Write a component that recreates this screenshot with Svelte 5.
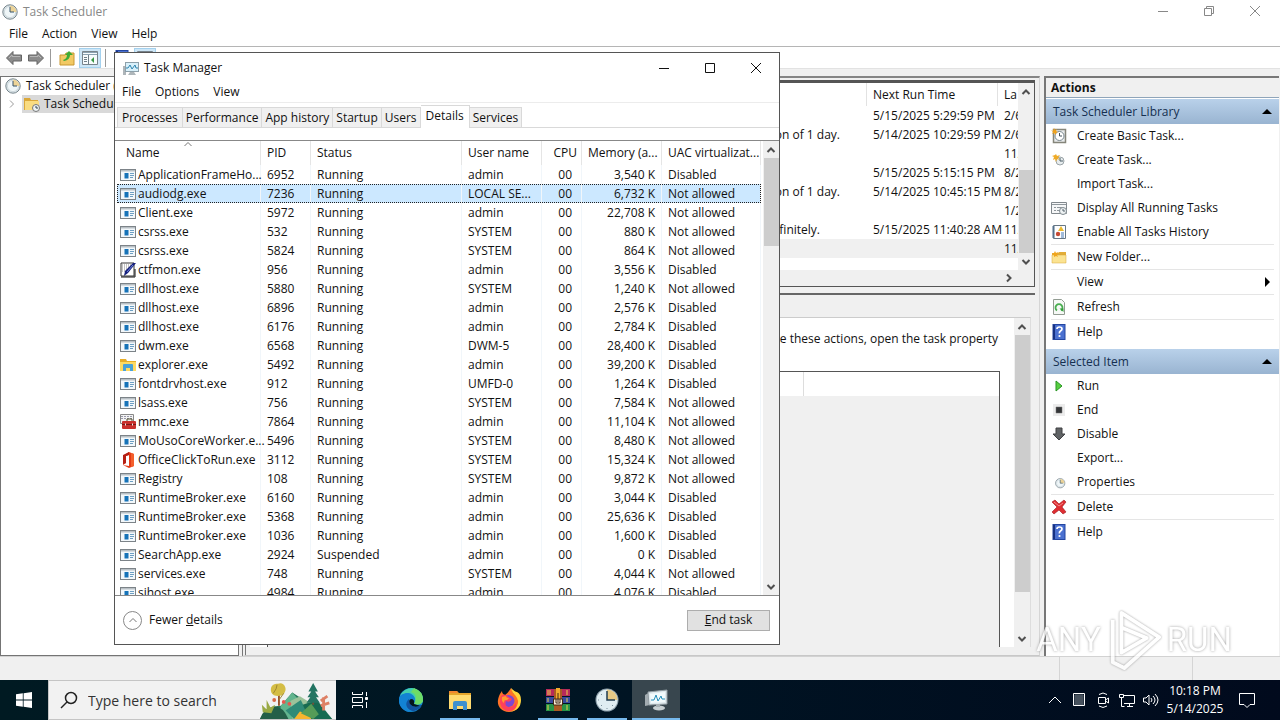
<script lang="ts">
	const processes = [
		['app', 'ApplicationFrameHo...', '6952', 'Running', 'admin', '3,540 K', 'Disabled'],
		['app', 'audiodg.exe', '7236', 'Running', 'LOCAL SE...', '6,732 K', 'Not allowed'],
		['app', 'Client.exe', '5972', 'Running', 'admin', '22,708 K', 'Not allowed'],
		['app', 'csrss.exe', '532', 'Running', 'SYSTEM', '880 K', 'Not allowed'],
		['app', 'csrss.exe', '5824', 'Running', 'SYSTEM', '864 K', 'Not allowed'],
		['pen', 'ctfmon.exe', '956', 'Running', 'admin', '3,556 K', 'Disabled'],
		['app', 'dllhost.exe', '5880', 'Running', 'SYSTEM', '1,240 K', 'Not allowed'],
		['app', 'dllhost.exe', '6896', 'Running', 'admin', '2,576 K', 'Disabled'],
		['app', 'dllhost.exe', '6176', 'Running', 'admin', '2,784 K', 'Disabled'],
		['app', 'dwm.exe', '6568', 'Running', 'DWM-5', '28,400 K', 'Disabled'],
		['explorer', 'explorer.exe', '5492', 'Running', 'admin', '39,200 K', 'Disabled'],
		['app', 'fontdrvhost.exe', '912', 'Running', 'UMFD-0', '1,264 K', 'Disabled'],
		['app', 'lsass.exe', '756', 'Running', 'SYSTEM', '7,584 K', 'Not allowed'],
		['toolbox', 'mmc.exe', '7864', 'Running', 'admin', '11,104 K', 'Not allowed'],
		['app', 'MoUsoCoreWorker.e...', '5496', 'Running', 'SYSTEM', '8,480 K', 'Not allowed'],
		['office', 'OfficeClickToRun.exe', '3112', 'Running', 'SYSTEM', '15,324 K', 'Not allowed'],
		['app', 'Registry', '108', 'Running', 'SYSTEM', '9,872 K', 'Not allowed'],
		['app', 'RuntimeBroker.exe', '6160', 'Running', 'admin', '3,044 K', 'Disabled'],
		['app', 'RuntimeBroker.exe', '5368', 'Running', 'admin', '25,636 K', 'Disabled'],
		['app', 'RuntimeBroker.exe', '1036', 'Running', 'admin', '1,600 K', 'Disabled'],
		['app', 'SearchApp.exe', '2924', 'Suspended', 'admin', '0 K', 'Disabled'],
		['app', 'services.exe', '748', 'Running', 'SYSTEM', '4,044 K', 'Not allowed'],
		['app', 'sihost.exe', '4984', 'Running', 'admin', '4,076 K', 'Disabled']
	]

	const tasks = [
		['', '5/15/2025 5:29:59 PM', '2/6'],
		['on of 1 day.', '5/14/2025 10:29:59 PM', '2/6'],
		['', '', '11/'],
		['', '5/15/2025 5:15:15 PM', '8/2'],
		['on of 1 day.', '5/14/2025 10:45:15 PM', '8/2'],
		['', '', '1/2'],
		['finitely.', '5/15/2025 11:40:28 AM', '11/'],
		['', '', '11/']
	]

	const groups = [
		{
			title: 'Task Scheduler Library',
			items: [
				{ icon: 'basic', text: 'Create Basic Task...' },
				{ icon: 'newtask', text: 'Create Task...' },
				{ icon: '', text: 'Import Task...' },
				{ icon: 'display', text: 'Display All Running Tasks' },
				{ icon: 'history', text: 'Enable All Tasks History' },
				{ icon: 'newfolder', text: 'New Folder...', line: true },
				{ icon: '', text: 'View', line: true, more: true },
				{ icon: 'refresh', text: 'Refresh', line: true },
				{ icon: 'help', text: 'Help', line: true }
			]
		},
		{
			title: 'Selected Item',
			items: [
				{ icon: 'run', text: 'Run' },
				{ icon: 'end', text: 'End' },
				{ icon: 'disable', text: 'Disable' },
				{ icon: '', text: 'Export...' },
				{ icon: 'properties', text: 'Properties' },
				{ icon: 'delete', text: 'Delete', line: true },
				{ icon: 'help', text: 'Help', line: true }
			]
		}
	]

	const tabs = ['Processes', 'Performance', 'App history', 'Startup', 'Users', 'Details', 'Services']

	const pinned = [
		{ icon: 'edge', label: 'Edge', state: '' },
		{ icon: 'files', label: 'File Explorer', state: 'open' },
		{ icon: 'firefox', label: 'Firefox', state: '' },
		{ icon: 'winrar', label: 'WinRAR', state: 'open' },
		{ icon: 'clock', label: 'Task Scheduler', state: 'open' },
		{ icon: 'monitor', label: 'Task Manager', state: 'active' }
	]

	let selected = 1
	let tab = 'Details'
</script>

{#snippet icon(name)}
	<svg class="icon" viewBox="0 0 16 16" aria-hidden="true">
		{#if name === 'app'}
			<rect x=".5" y="2.5" width="15" height="11" fill="#f3f8fb" stroke="#7c8388" />
			<path d="M1 3h14v1.500H1z" fill="#b9c0c5" />
			<path d="M4.500 6h4v5.500h-4z" fill="#1673b8" />
			<path d="M10 6.500h4M10 8.500h4M10 10.500h3" stroke="#6d9fc3" />
		{:else if name === 'pen'}
			<path d="M1 1h13v13H1z" fill="#fff" stroke="#333" />
			<path d="M2 3h9M2 5h8M2 7h6M2 9h4" stroke="#888" stroke-dasharray="1 1" />
			<path d="M16 1L8 11l-4 3 1-5 8-8z" fill="#16207c" />
			<path d="M13 3L7 10" stroke="#6e83dc" />
			<path d="M1 15h14V7" fill="none" stroke="#111" />
		{:else if name === 'explorer'}
			<path d="M0 2h6l1 2h9v10H0z" fill="#e8ad28" />
			<path d="M0 5h16v9H0z" fill="#ffda62" />
			<path d="M3 14V8q0-1 1-1h8q1 0 1 1v6h-3v-3H6v3z" fill="#4aa1d8" />
		{:else if name === 'toolbox'}
			<path d="M.5.500h13v9H.5z" fill="#f3f3f3" stroke="#888" />
			<path d="M1 2.500h12M1 4.500h12" stroke="#99a" stroke-dasharray="2 1" />
			<path d="M7 7V5h5v2" fill="none" stroke="#553" />
			<rect x="2" y="7" width="14" height="8" rx="1" fill="#c9302c" />
			<path d="M2 10.500h14" stroke="#7b1715" />
			<path d="M5.500 9.500v2M12.500 9.500v2" stroke="#eee" />
		{:else if name === 'office'}
			<path d="M9 0l5 2v12l-5 2-6-3 6 1V3L6 4v7l-3 2V4z" fill="#e43a16" />
			<path d="M9 0L3 3v9l3-1V4l3-1z" fill="#b51f14" />
			<path d="M11 1l3 1v12l-3 1z" fill="#f35f2c" />
		{:else if name === 'clock' || name === 'properties'}
			<g transform={name === 'properties' ? 'translate(4 4) scale(.65)' : ''}>
				<circle cx="8" cy="8" r="7.200" fill="#dce8ec" stroke="#77848b" />
				<circle cx="8" cy="8" r="5.600" fill="#eff6f8" stroke="#b7c1c6" stroke-width=".5" />
				<path d="M8 8V1.500A6.500 6.500 0 0 1 14.500 8z" fill="#ecd397" />
				<path d="M8 3v5h4" fill="none" stroke="#36556c" />
			</g>
		{:else if name === 'clockfolder'}
			<path d="M0 2h6l1 2h7v10H0z" fill="#dba83a" />
			<path d="M1 5h14v9H1z" fill="#f9dc82" />
			<circle cx="12" cy="12" r="3.500" fill="#edf3f5" stroke="#777" />
			<path d="M12 10v2h2" fill="none" stroke="#345" />
		{:else if name === 'monitor'}
			<path d="M0 6h3v9H0z" fill="#aeb5b9" />
			<rect x="2.500" y="2.500" width="13" height="9" fill="#d8f0fa" stroke="#8da0aa" />
			<path d="M3 8h2l2-3 2 4 3-4 1 3h2" fill="none" stroke="#2d84af" />
			<path d="M7 12h4l2 3H5z" fill="#aeb6ba" />
		{:else if name === 'back' || name === 'forward'}
			<g transform={name === 'forward' ? 'matrix(-1 0 0 1 16 0)' : ''}>
				<path d="M.5 8L7 1.500V5h8.500v6H7v3.500z" fill="#8b8b8b" stroke="#646464" />
				<path d="M3 8l3-3v1.500h8" fill="none" stroke="#b5b5b5" />
			</g>
		{:else if name === 'up'}
			<path d="M1 5h5l1-2h8v12H1z" fill="#f2c964" stroke="#c99731" />
			<path d="M4 10q4-1 4-5H6l4-4 4 4h-3q0 5-6 6z" fill="#3dab36" />
		{:else if name === 'pane'}
			<path d="M.5 1.500h15v13H.5z" fill="#f7fbfd" stroke="#78838b" />
			<path d="M1 2.500h14M1 4.500h14" stroke="#8ba2b2" />
			<path d="M6.500 5v9M2 7.500h3M2 9.500h3M2 11.500h3" stroke="#6f7e88" />
			<path d="M12 7v6l-3-3z" fill="#399744" />
		{:else if name === 'basic' || name === 'newtask'}
			{#if name === 'basic'}
				<path d="M2.500 1.500h12v13h-12z" fill="#e7eaeb" stroke="#85857a" stroke-width="1.500" />
				<circle cx="8.500" cy="8" r="4.500" fill="#fff" stroke="#78868d" />
				<path d="M8.500 5v3H11" fill="none" stroke="#43525c" />
				<path d="M3 0l1 2 2-1-1 2 2 1-2 1v2L3 5 1 6l1-2-2-2 2 1z" fill="#efa21d" />
			{:else}
				<circle cx="9" cy="9" r="4" fill="#e7ecee" stroke="#9ba4a8" />
				<path d="M9 6v3h3" fill="none" stroke="#4b5c67" />
				<path d="M5 2l1 2 3-1-2 3 2 2-3-1-1 3-1-3-2 1 1-3-2-1 3-1z" fill="#efab27" />
			{/if}
		{:else if name === 'display'}
			<path d="M.5 2.500h15v11H.5z" fill="#f6f7f8" stroke="#81888d" />
			<path d="M1 4.500h14M3 7.500h2M6 7.500h5M3 10.500h2M6 10.500h3" stroke="#8e969b" />
			<circle cx="12" cy="11" r="3.500" fill="#eef2f3" stroke="#808a90" />
			<path d="M12 9v2h2" fill="none" stroke="#53616a" />
		{:else if name === 'history'}
			<path d="M2.500 1.500h12v13h-12z" fill="#fff" stroke="#667785" />
			<path d="M1 3h3M1 5h3M1 7h3M1 9h3M1 11h3M1 13h3" stroke="#4b6c8c" />
			<path d="M10 2l3 5H7z" fill="#ebb92f" />
			<circle cx="7" cy="10" r="2.200" fill="#c64a35" />
			<path d="M10 9h3M10 11h3M10 13h3" stroke="#4478b5" />
		{:else if name === 'newfolder'}
			<path d="M1 4h6l1-1h7v11H1z" fill="#e2ac37" />
			<path d="M1 6h14v8H1z" fill="#fbe391" stroke="#d6a439" stroke-width=".5" />
			<path d="M4 2l1 2 2-1-1 3 1 2-2-1-2 1V6L1 5l2-1z" fill="#f1a51b" />
		{:else if name === 'refresh'}
			<path d="M2.500.5h8l3 3v12h-11z" fill="#f6f9f6" stroke="#929c92" />
			<path d="M6 11.500a3.500 3.500 0 1 1 4 0" fill="none" stroke="#49ae50" stroke-width="1.800" />
			<path d="M8.500 9.500h4v3.500z" fill="#319c3a" />
		{:else if name === 'help'}
			<rect x="2" y=".5" width="12" height="15" fill="#4a70d0" stroke="#2345a0" />
			<path d="M3 1v14" stroke="#173181" stroke-width="2" />
			<path d="M6 5q0-2 2.500-2T11 5q0 1-1.500 2T8.500 9.500" fill="none" stroke="#fff" stroke-width="1.700" />
			<circle cx="8.500" cy="12" r="1.100" fill="#fff" />
		{:else if name === 'run'}
			<path d="M5 3l6 5-6 5z" fill="#58cf42" stroke="#269521" />
		{:else if name === 'end'}
			<path d="M2 2h12v12H2z" fill="#ececec" />
			<path d="M5 5h6v6H5z" fill="#343638" stroke="#767676" stroke-width=".5" />
		{:else if name === 'disable'}
			<path d="M5 2h6v6h3l-6 6-6-6h3z" fill="#606365" stroke="#3e4042" />
		{:else if name === 'delete'}
			<path d="M1 3l3-2 4 4 5-4 2 2-4 5 4 5-3 2-4-4-5 4-2-2 5-5z" fill="#df2d32" stroke="#9d171c" stroke-width=".6" />
			<path d="M3 3l5 4 4-3" fill="none" stroke="#f58a8a" />
		{/if}
	</svg>
{/snippet}

{#snippet chevron(direction)}
	<svg class="chevron {direction}" viewBox="0 0 10 10" aria-hidden="true">
		<path d="M1.500 7L5 3.500 8.500 7" />
	</svg>
{/snippet}

{#snippet scrollbar(start, size)}
	<div class="scrollbar">
		<button aria-label="Scroll up">{@render chevron('')}</button>
		<div class="track">
			<div class="thumb" style="top: {start}%; height: {size}%"></div>
		</div>
		<button aria-label="Scroll down">{@render chevron('down')}</button>
	</div>
{/snippet}

{#snippet windowButtons(restore)}
	<div class="window-buttons">
		<button aria-label="Minimize">
			<svg viewBox="0 0 12 12"><path d="M1 6.500h10" /></svg>
		</button>
		<button aria-label="Maximize">
			<svg viewBox="0 0 12 12">
				{#if restore}
					<path d="M1.500 3.500h7v7h-7zM3.500 3.500v-2h7v7h-2" />
				{:else}
					<path d="M1.500 1.500h9v9h-9z" />
				{/if}
			</svg>
		</button>
		<button aria-label="Close">
			<svg viewBox="0 0 12 12"><path d="M1 1l10 10M11 1L1 11" /></svg>
		</button>
	</div>
{/snippet}

<div class="desktop">
	<main class="scheduler">
		<header class="titlebar">
			{@render icon('clock')}
			<span>Task Scheduler</span>
			{@render windowButtons(true)}
		</header>
		<nav class="menu">
			<button>File</button>
			<button>Action</button>
			<button>View</button>
			<button>Help</button>
		</nav>
		<div class="toolbar">
			<button aria-label="Back">{@render icon('back')}</button>
			<button aria-label="Forward">{@render icon('forward')}</button>
			<i></i>
			<button aria-label="Up">{@render icon('up')}</button>
			<button class="on" aria-label="Console tree">{@render icon('pane')}</button>
			<i></i>
			<button aria-label="Help">{@render icon('help')}</button>
			<button class="on" aria-label="Action pane">{@render icon('pane')}</button>
		</div>

		<div class="panes">
			<aside class="tree">
				<div class="node">{@render icon('clock')}<span>Task Scheduler (L</span></div>
				<div class="node child">
					{@render chevron('right')}
					<span class="leaf">{@render icon('clockfolder')}<span>Task Schedule</span></span>
				</div>
			</aside>

			<section class="middle">
				<div class="list">
					<div class="list-body">
						<table>
							<colgroup><col /><col class="next" /><col class="last" /></colgroup>
							<thead>
								<tr><th></th><th>Next Run Time</th><th>La</th></tr>
							</thead>
							<tbody>
								{#each tasks as [trigger, next, last], i}
									<tr class:current={i === tasks.length - 1}>
										<td>{trigger}</td>
										<td>{next}</td>
										<td>{last}</td>
									</tr>
								{/each}
							</tbody>
						</table>
						{@render scrollbar(46, 54)}
					</div>
					<div class="hscroll">
						<button aria-label="Scroll right">{@render chevron('right')}</button>
					</div>
				</div>
				<div class="detail">
					<div class="detail-page">
						<div class="detail-content">
							<p>nge these actions, open the task property</p>
							<div class="actions-box">
								<div class="box-head"><span></span></div>
							</div>
						</div>
						{@render scrollbar(0, 87)}
					</div>
				</div>
			</section>

			<aside class="actions">
				<h2>Actions</h2>
				{#each groups as group}
					<section>
						<button class="group-title">
							{group.title}
							<svg viewBox="0 0 10 5"><path d="M0 5l5-5 5 5z" /></svg>
						</button>
						{#each group.items as item}
							<button class="action" class:line={item.line}>
								{@render icon(item.icon)}
								<span>{item.text}</span>
								{#if item.more}
									<svg class="more" viewBox="0 0 5 10"><path d="M0 0l5 5-5 5z" /></svg>
								{/if}
							</button>
						{/each}
					</section>
				{/each}
			</aside>
		</div>
		<footer class="status"><span></span><span></span></footer>
	</main>

	<section class="manager">
		<header class="titlebar">
			{@render icon('monitor')}
			<span>Task Manager</span>
			{@render windowButtons(false)}
		</header>
		<nav class="menu">
			<button>File</button>
			<button>Options</button>
			<button>View</button>
		</nav>
		<div class="tabs" role="tablist">
			{#each tabs as name}
				<button
					role="tab"
					aria-selected={tab === name}
					class:chosen={tab === name}
					on:click={() => (tab = name)}
				>
					{name}
				</button>
			{/each}
		</div>
		<div class="processes">
			<div class="rows">
				<table>
					<colgroup>
						<col class="name" />
						<col class="pid" />
						<col class="state" />
						<col class="user" />
						<col class="cpu" />
						<col class="user" />
						<col />
					</colgroup>
					<thead>
						<tr>
							<th>Name <span class="sort">{@render chevron('')}</span></th>
							<th>PID</th>
							<th>Status</th>
							<th>User name</th>
							<th>CPU</th>
							<th>Memory (a...</th>
							<th>UAC virtualizat...</th>
						</tr>
					</thead>
					<tbody>
						{#each processes as [kind, name, pid, state, user, memory, uac], i}
							<tr class:selected={i === selected} on:click={() => (selected = i)}>
								<td><div class="process">{@render icon(kind)}{name}</div></td>
								<td>{pid}</td>
								<td>{state}</td>
								<td>{user}</td>
								<td>00</td>
								<td>{memory}</td>
								<td>{uac}</td>
							</tr>
						{/each}
					</tbody>
				</table>
			</div>
			{@render scrollbar(0, 21)}
		</div>
		<footer>
			<button class="fewer">
				<span class="ring">{@render chevron('')}</span>
				<span>Fewer <u>d</u>etails</span>
			</button>
			<button class="end-task"><u>E</u>nd task</button>
		</footer>
	</section>

	<div class="watermark">
		<span>ANY</span>
		<svg viewBox="0 0 60 66" aria-hidden="true">
			<path d="M17 42V5l39 25-36 32-12-6V12M17 21v25l26-15-26-11" />
		</svg>
		<span>RUN</span>
	</div>

	<nav class="taskbar">
		<button class="start" aria-label="Start">
			<svg viewBox="0 0 16 16">
				<path d="M0 2.300L6.800 1.300v6.300H0zM7.600 1.200L16 0v7.600H7.600zM0 8.400h6.800v6.300L0 13.700zM7.600 8.400H16V16l-8.400-1.200z" />
			</svg>
		</button>
		<label class="search">
			<svg class="glass" viewBox="0 0 18 18">
				<circle cx="11" cy="7" r="5.500" />
				<path d="M7 11l-6 6" />
			</svg>
			<input placeholder="Type here to search" aria-label="Search" />
			<svg class="scene" viewBox="0 0 78 40" aria-hidden="true">
				<path d="M0 40q8-14 22-14l12-14 14 9 28 19z" fill="#27775b" />
				<path d="M22 26l12-14 8 9-8 19H20z" fill="#62b58e" />
				<path d="M32 21l10-5 18 11-8 13H34z" fill="#9cc39a" />
				<path d="M27 31l16-11 6 12-13 8z" fill="#308b77" />
				<path d="M45 25l15-5 16 20H52z" fill="#176b51" />
				<path d="M36 40l6-8 10 3 2 5z" fill="#f7b52f" />
				<path d="M43 34l11-10 8 11-6 5z" fill="#559c58" />
				<path d="M0 40q4-12 14-13t16 13z" fill="#245f48" />
				<path d="M20 26V11" stroke="#9b542c" stroke-width="2" />
				<path d="M12 12c-2-6 2-10 7-9 6-3 10 5 7 9-2 5-12 5-14 0z" fill="#d4bd45" />
				<path d="M14 13q4-5 4-9M20 20l5-7" stroke="#9c842e" fill="none" />
				<path d="M56 25V7" stroke="#735238" stroke-width="2" />
				<path d="M56 2l-5 9h3l-4 6h3l-4 6h14l-4-6h3l-4-6h3z" fill="#237462" />
				<path d="M3 33l-1-8 5 5V20l4 8 5-3-4 9z" fill="#99a944" />
				<path d="M67 31V17M64 21l7-5M64 26l9-3" stroke="#de8065" stroke-width="3" />
				<circle cx="15" cy="20" r="2" fill="#d96846" />
				<circle cx="31" cy="24" r="2" fill="#e6584d" />
				<circle cx="25" cy="22" r="2" fill="#e6584d" />
			</svg>
		</label>
		<button class="taskview" aria-label="Task view">
			<svg viewBox="0 0 16 16">
				<path d="M.5 0v2.500h10V0M.5 5.500h10v5H.5zM.5 16v-2.500h10V16M14.500 0v4M14.500 10v6" />
				<path d="M13.500 5.500h2v2h-2z" fill="#fff" />
			</svg>
		</button>
		<div class="pins">
			{#each pinned as pin}
				<button class={pin.state} aria-label={pin.label}>
					<svg viewBox="0 0 24 24">
						{#if pin.icon === 'edge'}
							<circle cx="12" cy="12" r="12" fill="#1688d1" />
							<path d="M1 8Q5 0 13 0c8 1 12 8 11 13-1 4-8 4-9 2 2-3 1-7-3-8C8 5 3 6 1 8z" fill="#43cfae" />
							<path d="M15 0q9 3 9 12c0 5-8 6-9 3q5-8-3-11z" fill="#6edc67" />
							<path d="M0 11C1 4 14 2 16 11c1 3-2 4-1 6-4 0-6-2-6-5C4 18 9 24 13 24 5 25-1 18 0 11z" fill="#1383d3" />
							<path d="M10 11c-6 5-1 12 5 12 4-1 7-4 8-6-6 3-13 2-13-6z" fill="#12539e" />
							<path d="M15 16q9 3 8 1-8 4-12-1-2-4 1-5 4 0 3 5z" fill="#04151d" />
						{:else if pin.icon === 'files'}
							<path d="M1 3h8l2 2h12v16H1z" fill="#e5a52b" />
							<path d="M1 7h22v14H1z" fill="#ffdb70" />
							<path d="M1 3h8l1 2H1z" fill="#f2872e" />
							<path d="M5 22v-7q0-2 2-2h10q2 0 2 2v7h-4v-4H9v4z" fill="#3f91ce" />
						{:else if pin.icon === 'firefox'}
							<path d="M5 3q0 3 3 4 4-3 6-7 2 4 2 5 6 3 7 8c1 7-5 11-11 11C4 24 0 18 1 12 2 7 3 6 5 3z" fill="#ff7226" />
							<path d="M14 0q1 5 4 7 5 6 2 11-2 5-8 6 12-2 12-12 0-6-4-8-2 0-6-4z" fill="#ffd43c" />
							<circle cx="11.500" cy="13" r="6" fill="#8146d0" />
							<path d="M4 8q3-3 6 0l5 3q-2 4-6 2-2 6 4 6 6-1 6-6 2 9-7 10C5 23 1 16 4 8z" fill="#ff405b" />
							<path d="M5 9q3-1 4-1 0 2 3 2-2 3-4 2-1 1-1 3-3-2-2-6z" fill="#ff9b2d" />
						{:else if pin.icon === 'winrar'}
							<path d="M0 1h24v7H0z" fill="#b72a5b" />
							<path d="M0 9h24v6H0z" fill="#374a9e" />
							<path d="M0 16h24v7H0z" fill="#279348" />
							<path d="M2 2v5M4 2v5M21 2v5M2 10v4M21 10v4M2 17v5M21 17v5" stroke="#ead24a" />
							<path d="M8 1h8v22H8z" fill="#aa5b24" />
							<path d="M10 0h4v11h-4z" fill="#f1ab2e" />
							<path d="M7.500 11h9v6h-9z" fill="#f5ead4" stroke="#422916" />
							<path d="M10 11v4h4v-4M12 5v9" fill="none" stroke="#422916" />
						{:else if pin.icon === 'clock'}
							<circle cx="12" cy="12" r="11.500" fill="#8fa2ad" />
							<circle cx="12" cy="12" r="10.500" fill="#e0edf2" />
							<path d="M12 12V1.500A10.500 10.500 0 0 1 22.500 12z" fill="#e7ca86" />
							<path d="M12 3v9h8" fill="none" stroke="#203c50" stroke-width="1.500" />
							<path d="M3 12h1M12 20v1M6 6l1 1M6 18l1-1M18 18l-1-1" stroke="#7c929f" />
						{:else}
							<path d="M1 7l5-3v13l-5 1z" fill="#a3acb1" />
							<path d="M4 4l19-2v14L5 17z" fill="#dfe9ed" stroke="#919ca2" />
							<path d="M6 6l15-2v10L7 15z" fill="#f2fafc" />
							<path d="M7 12h3l2-5 2 6 3-5 1 3h3" fill="none" stroke="#258db8" />
							<ellipse cx="15" cy="20" rx="6" ry="2.500" fill="#c7cfd2" />
							<path d="M12 16h4v3h-4z" fill="#a6afb3" />
						{/if}
					</svg>
				</button>
			{/each}
		</div>
		<div class="tray">
			<button aria-label="Show hidden icons"><svg viewBox="0 0 16 16"><path d="M2 11l6-6 6 6" /></svg></button>
			<button aria-label="Input grid">
				<svg viewBox="0 0 16 16">
					<path d="M2.500 1.500h11v12h-11z" />
					<path class="mesh" d="M5 2v11M7 2v11M9 2v11M11 2v11M3 4h10M3 6h10M3 8h10M3 10h10M3 12h10" />
				</svg>
			</button>
			<button aria-label="Camera">
				<svg viewBox="0 0 16 16"><path d="M3.500 5.500h7v6h-7zM10.500 8l3-2v5l-3-2M4 2.500q4-3 8 0M4 14q4 3 8 0" /></svg>
			</button>
			<button aria-label="Network">
				<svg viewBox="0 0 16 16"><path d="M4.500 3.500h11v8H5M2.500 6v8.500h3M8 14.500h6M10.500 12v2M.5 2.500h4v3h-4z" /></svg>
			</button>
			<button aria-label="Volume">
				<svg viewBox="0 0 16 16"><path d="M.5 6v4H3l3 3V3L3 6zM8 6q2 2 0 4M10 4q4 4 0 8M12 2q6 6 0 12" /></svg>
			</button>
			<time>10:18 PM<br />5/14/2025</time>
			<button class="notes" aria-label="Notifications">
				<svg viewBox="0 0 16 16"><path d="M.5 1.500h15v11H11L8 15.500l-3-3H.5z" /></svg>
			</button>
		</div>
	</nav>
</div>

<style>
	:global(body) {
		margin: 0;
		font-family: 'Open Sans', 'Noto Sans', sans-serif;
		font-size: 12px;
		line-height: 16px;
		color: #111;
	}

	button {
		margin: 0;
		padding: 0;
		font: inherit;
		color: inherit;
		background: none;
		border: 0;
	}

	svg {
		display: block;
		flex: none;
	}

	table {
		width: 100%;
		height: max-content;
		table-layout: fixed;
		border-collapse: separate;
		border-spacing: 0;
	}

	th,
	td {
		box-sizing: border-box;
		height: 19px;
		padding: 0 0 0 6px;
		font-weight: normal;
		text-align: left;
		white-space: nowrap;
	}

	.desktop {
		position: relative;
		height: 100vh;
		display: flex;
		flex-direction: column;
		overflow: hidden;
	}

	.scheduler {
		flex: 1;
		min-height: 0;
		display: flex;
		flex-direction: column;
		background: #f0f0f0;
	}

	.icon {
		width: 16px;
		height: 16px;
	}

	.titlebar {
		height: 24px;
		padding: 0 2px;
		display: flex;
		align-items: center;
		gap: 5px;
		color: #888;
		background: #fff;
	}

	.window-buttons {
		align-self: stretch;
		margin-left: auto;
		display: flex;
	}

	.window-buttons button {
		width: 46px;
		display: grid;
		place-content: center;
	}

	.window-buttons svg {
		width: 12px;
		height: 12px;
		fill: none;
		stroke: currentColor;
	}

	.scheduler .window-buttons {
		padding-bottom: 3px;
	}

	.menu {
		height: 20px;
		padding: 0 0 2px 2px;
		display: flex;
		align-items: center;
		background: #fff;
	}

	.menu button {
		padding: 0 7px;
	}

	.toolbar {
		height: 21px;
		padding-left: 4px;
		display: flex;
		align-items: center;
		gap: 2px;
		background: #fff;
		border-top: 1px solid #b5b5b5;
		border-bottom: 1px solid #e2e2e2;
	}

	.toolbar button {
		padding: 2px;
	}

	.toolbar i {
		width: 1px;
		height: 18px;
		margin: 0 4px 0 2px;
		background: #9a9a9a;
	}

	.toolbar .on {
		padding: 2px 3px;
		background: #cde6f7;
		box-shadow: inset 0 0 0 1px #a4d1ee;
	}

	.panes {
		flex: 1;
		min-height: 0;
		padding-top: 7px;
		display: flex;
	}

	.tree {
		box-sizing: border-box;
		width: 239px;
		margin-right: 3px;
		background: #fff;
		border: 1px solid #747474;
	}

	.node {
		height: 18px;
		padding-left: 4px;
		display: flex;
		align-items: center;
		gap: 5px;
	}

	.leaf {
		flex: 1;
		height: 18px;
		display: flex;
		align-items: center;
		gap: 4px;
		background: #d9d9d9;
	}

	.leaf .icon {
		margin-left: 2px;
	}

	.chevron {
		width: 10px;
		height: 10px;
		fill: none;
		stroke: #505050;
		stroke-width: 2;
	}

	.chevron.down {
		transform: rotate(180deg);
	}

	.chevron.right {
		transform: rotate(90deg);
	}

	.tree .chevron {
		margin-left: 2px;
		stroke: #999;
		stroke-width: 1;
	}

	.middle {
		flex: 1;
		min-width: 0;
		padding: 2px 4px 8px 0;
		display: flex;
		flex-direction: column;
		gap: 6px;
		border-top: 2px solid #858585;
		border-left: 4px double #777;
		border-right: 1px solid #d5d5d5;
		border-bottom: 1px solid #c8c8c8;
	}

	.list {
		border: 1px solid #555;
		border-top-width: 3px;
	}

	.list-body {
		display: flex;
		height: 187px;
		background: #fff;
	}

	.list .next {
		width: 131px;
	}

	.list .last {
		width: 20px;
	}

	.list th {
		height: 23px;
		border-right: 1px solid #e2e2e2;
	}

	.list th:last-child {
		border: 0;
	}

	.list th:last-child,
	.list td:last-child {
		overflow: hidden;
	}

	.list td:first-child {
		padding-right: 27px;
		text-align: right;
	}

	.list tr:nth-child(7) td:first-child {
		padding-right: 47px;
	}

	.list .current {
		background: #f0f0f0;
	}

	.scrollbar {
		flex: none;
		width: 16px;
		display: flex;
		flex-direction: column;
		background: #f0f0f0;
	}

	.scrollbar button {
		height: 17px;
		display: grid;
		place-content: center;
	}

	.track {
		position: relative;
		flex: 1;
	}

	.thumb {
		position: absolute;
		left: 1px;
		right: 0;
		background: #cdcdcd;
	}

	.hscroll {
		height: 16px;
		padding-right: 20px;
		display: flex;
		justify-content: flex-end;
	}

	.detail {
		flex: 1;
		min-height: 0;
		padding: 22px 4px 0;
		display: flex;
		border-top: 2px solid #666;
	}

	.detail-page {
		flex: 1;
		display: flex;
		background: #fff;
		border-top: 1px solid #ccc;
		border-right: 1px solid #ddd;
	}

	.detail-content {
		flex: 1;
		padding: 13px 14px 0 17px;
		display: flex;
		flex-direction: column;
	}

	.detail-content p {
		margin: 0 2px 24px 0;
		text-align: right;
	}

	.actions-box {
		flex: 1;
		background: #f0f0f0;
		border: 1px solid #555;
		border-bottom: 0;
	}

	.box-head {
		height: 24px;
		display: flex;
		justify-content: flex-end;
		background: #fff;
	}

	.box-head span {
		width: 195px;
		border-left: 1px solid #ddd;
	}

	.actions {
		width: 233px;
		margin: 0 1px 0 4px;
		background: #fff;
		border-top: 2px solid #777;
		border-left: 2px solid #777;
	}

	.actions h2 {
		height: 19px;
		margin: 0 0 1px;
		padding-left: 5px;
		font-size: 12px;
		line-height: 20px;
		background: #f0f0f0;
		border-bottom: 1px solid #8fa5ba;
	}

	.actions section {
		margin-bottom: 5px;
	}

	.group-title {
		width: 100%;
		height: 25px;
		padding: 0 7px;
		display: flex;
		align-items: center;
		justify-content: space-between;
		color: #152f50;
		background: linear-gradient(#b9d1ea, #99b4d1);
	}

	.group-title svg {
		width: 10px;
		height: 5px;
		fill: #000;
	}

	.action {
		box-sizing: content-box;
		width: calc(100% - 14px);
		height: 24px;
		margin: 0 5px;
		padding-right: 4px;
		display: flex;
		align-items: center;
		gap: 10px;
		text-align: left;
	}

	.action.line {
		border-top: 1px solid #e5e5e5;
	}

	.more {
		width: 5px;
		height: 10px;
		margin-left: auto;
	}

	.status {
		height: 23px;
		padding-right: 87px;
		display: flex;
		justify-content: flex-end;
		gap: 132px;
		border-top: 1px solid #d2d2d2;
	}

	.status span {
		border-left: 1px solid #d5d5d5;
	}

	.manager {
		position: absolute;
		left: 114px;
		top: 52px;
		box-sizing: border-box;
		width: 666px;
		height: 593px;
		display: flex;
		flex-direction: column;
		background: #fff;
		border: 1px solid #555;
	}

	.manager .titlebar {
		height: 29px;
		padding: 0 0 0 8px;
		color: #111;
	}

	.manager .menu {
		padding: 0;
		border-bottom: 1px solid #ececec;
	}

	.tabs {
		height: 24px;
		padding: 0 2px;
		display: flex;
		align-items: flex-end;
		border-bottom: 1px solid #d9d9d9;
	}

	.tabs button {
		height: 20px;
		padding: 0 3px;
		background: #f0f0f0;
		border: 1px solid #d9d9d9;
		border-width: 1px 1px 0 0;
	}

	.tabs button:first-child {
		padding: 0 4px;
		border-left-width: 1px;
	}

	.tabs .chosen {
		height: 23px;
		padding: 0 5px 3px;
		margin-bottom: -1px;
		background: #fff;
	}

	.processes {
		flex: 1;
		min-height: 0;
		margin-top: 12px;
		display: flex;
		border-top: 1px solid #888;
		border-bottom: 1px solid #888;
	}

	.rows {
		flex: 1;
		padding: 0 2px;
		overflow: hidden;
	}

	.name {
		width: 144px;
	}

	.pid {
		width: 50px;
	}

	.state {
		width: 151px;
	}

	.user {
		width: 80px;
	}

	.cpu {
		width: 40px;
	}

	.rows th {
		height: 24px;
		border-right: 1px solid #e5e5e5;
	}

	.rows th:first-child {
		position: relative;
		padding-left: 9px;
	}

	.rows td {
		border-right: 1px solid #f1f6fa;
	}

	.rows td:first-child {
		padding-left: 3px;
	}

	.rows th:nth-child(5),
	.rows th:nth-child(6) {
		padding-right: 4px;
		text-align: right;
	}

	.rows td:nth-child(5) {
		padding-right: 9px;
		text-align: right;
	}

	.rows td:nth-child(6) {
		padding-right: 6px;
		text-align: right;
	}

	.rows .selected {
		background: #cce8ff;
		outline: 1px dotted #222;
		outline-offset: -1px;
	}

	.process {
		display: flex;
		align-items: center;
		gap: 2px;
	}

	.sort {
		position: absolute;
		top: -2px;
		left: 66px;
	}

	.sort .chevron,
	.ring .chevron {
		stroke: #777;
		stroke-width: 1;
	}

	.manager footer {
		height: 48px;
		padding: 0 9px 0 8px;
		display: flex;
		align-items: center;
		justify-content: space-between;
	}

	.fewer {
		display: flex;
		align-items: center;
		gap: 7px;
	}

	.ring {
		width: 17px;
		height: 17px;
		display: grid;
		place-content: center;
		border: 1px solid #888;
		border-radius: 50%;
	}

	.end-task {
		width: 83px;
		height: 21px;
		background: #e1e1e1;
		border: 1px solid #adadad;
	}

	.watermark {
		position: absolute;
		right: 48px;
		bottom: 46px;
		display: flex;
		align-items: center;
		gap: 4px;
		font-family: 'Roboto', sans-serif;
		font-size: 33px;
		line-height: 68px;
		color: #fff;
		text-shadow: 0 0 3px #888;
		opacity: 0.8;
		pointer-events: none;
	}

	.watermark svg {
		width: 58px;
		height: 64px;
		fill: none;
		stroke: #fff;
		stroke-width: 4;
		stroke-linejoin: round;
		filter: drop-shadow(0 0 1px #888);
	}

	.taskbar {
		height: 40px;
		display: flex;
		color: #fff;
		background: linear-gradient(90deg, #001a22, #001423 50%, #010a1d);
	}

	.start,
	.taskview {
		width: 48px;
		display: grid;
		place-content: center;
	}

	.start svg,
	.taskview svg {
		width: 16px;
		height: 16px;
		fill: #fff;
	}

	.taskview svg {
		fill: none;
		stroke: #fff;
	}

	.search {
		box-sizing: border-box;
		width: 288px;
		padding-left: 11px;
		display: flex;
		align-items: center;
		gap: 10px;
		background: #f2f2f2;
		border: 1px solid #c5c5c5;
		border-right: 0;
	}

	.glass {
		width: 18px;
		height: 18px;
		fill: none;
		stroke: #222;
		stroke-width: 1.5;
	}

	.search input {
		flex: 1;
		min-width: 0;
		padding: 0;
		font: 14px 'Open Sans', sans-serif;
		background: none;
		border: 0;
		outline: 0;
	}

	.search input::placeholder {
		color: #333;
		opacity: 1;
	}

	.scene {
		width: 78px;
		height: 38px;
	}

	.pins {
		display: flex;
		gap: 1px;
		padding-left: 3px;
	}

	.pins button {
		width: 48px;
		display: grid;
		place-content: center;
	}

	.pins svg {
		width: 24px;
		height: 24px;
	}

	.pins .open {
		background: linear-gradient(#76b9ed, #76b9ed) center bottom / 40px 2px no-repeat;
	}

	.pins .active {
		background: #38464e;
		box-shadow: inset 0 -2px #76b9ed;
	}

	.tray {
		margin-left: auto;
		padding-right: 21px;
		display: flex;
		align-items: center;
	}

	.tray button {
		width: 24px;
		height: 40px;
		display: grid;
		place-content: center;
	}

	.tray svg {
		width: 16px;
		height: 16px;
		fill: none;
		stroke: #fff;
	}

	.tray .mesh {
		stroke: #8e979d;
		stroke-width: 0.6;
	}

	.tray time {
		width: 64px;
		line-height: 18px;
		text-align: center;
		white-space: nowrap;
	}

	.tray .notes {
		margin-left: 8px;
	}
</style>
